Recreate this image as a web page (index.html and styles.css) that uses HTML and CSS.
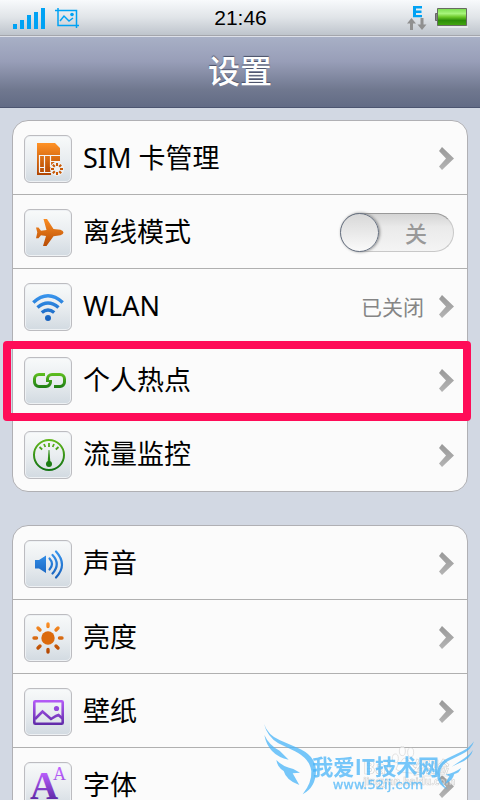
FILE: index.html
```html
<!DOCTYPE html>
<html lang="zh-CN">
<head>
  <meta charset="UTF-8">
  <meta name="viewport" content="width=device-width, initial-scale=1.0">
  <title>设置</title>
  <link rel="stylesheet" href="styles.css">
</head>
<body>
<svg class="defs" width="0" height="0" aria-hidden="true">
  <defs>
    <linearGradient id="orange" gradientUnits="userSpaceOnUse" x1="0" y1="8" x2="0" y2="40"><stop offset="0" stop-color="#ff9226"/><stop offset="1" stop-color="#b04400"/></linearGradient>
    <linearGradient id="blue" gradientUnits="userSpaceOnUse" x1="0" y1="8" x2="0" y2="40"><stop offset="0" stop-color="#3c9cf4"/><stop offset="1" stop-color="#145cb8"/></linearGradient>
    <linearGradient id="green" gradientUnits="userSpaceOnUse" x1="0" y1="9" x2="0" y2="38"><stop offset="0" stop-color="#62b81c"/><stop offset="1" stop-color="#147414"/></linearGradient>
    <linearGradient id="link-green" gradientUnits="userSpaceOnUse" x1="0" y1="16" x2="0" y2="31"><stop offset="0" stop-color="#60c020"/><stop offset="1" stop-color="#1c7c14"/></linearGradient>
    <linearGradient id="purple" gradientUnits="userSpaceOnUse" x1="0" y1="10" x2="0" y2="38"><stop offset="0" stop-color="#bc60ff"/><stop offset="1" stop-color="#5c28a4"/></linearGradient>
    <linearGradient id="battery" x1="0" y1="0" x2="0" y2="1"><stop offset="0" stop-color="#78dc4c"/><stop offset=".3" stop-color="#a8f47c"/><stop offset=".5" stop-color="#6cc828"/><stop offset=".7" stop-color="#2c8c08"/><stop offset="1" stop-color="#44a810"/></linearGradient>
    <linearGradient id="arrow" x1="0" y1="0" x2="0" y2="1"><stop offset="0" stop-color="#999"/><stop offset="1" stop-color="#b4b4b4"/></linearGradient>
    <symbol id="chevron" viewBox="0 0 15 23"><path fill="url(#arrow)" d="M3 0 15 11.5 3 23 0 19.5 7 11.5 0 4z"/></symbol>
  </defs>
</svg>

<div class="status-bar">
  <div class="status-left">
    <svg width="33" height="22" viewBox="0 0 33 22" fill="#00a2f4"><path d="M0 17h4v5H0zM7 13h4v9H7zM14 8h4v14h-4zM21 5h4v17h-4zM28 1h4v21h-4z"/></svg>
    <svg width="24" height="20" viewBox="0 0 24 20" fill="none" stroke="#00a2f4" stroke-width="1.5"><path d="M0 2.500h21.500V20M3 0v17.500h21M5 13l4-5 5 5 4-3"/><circle cx="17" cy="6.500" r="1.800" fill="#00a2f4" stroke="none"/></svg>
  </div>
  <time>21:46</time>
  <div class="status-right">
    <svg width="22" height="26" viewBox="0 0 22 26"><path fill="#00a2f4" d="M7 1h9v2.500h-6v2h5.500v2.400H10v2h6V12.300H7z"/><path fill="#909090" d="M5.500 13 10 18.500H7V25H4v-6.500H1zM16 25l-4.500-5.500h3V13h3v6.500h3z"/></svg>
    <svg width="33" height="20" viewBox="0 0 33 20"><path fill="#fff" d="M3 18.500h30v1H3z"/><path fill="#858585" stroke="#666" d="M.5 5.500h3v7h-3z"/><path fill="url(#battery)" stroke="#666b60" d="M2.500.5h29v17h-29z"/></svg>
  </div>
</div>

<header class="title-bar"><h1>设置</h1></header>

<main>
  <ul class="group">
    <li>
      <a class="row" href="#sim">
        <svg class="icon" viewBox="1 1 46 46"><path fill="url(#orange)" d="M13 8h18l5 5v14h-5l-4 4v9H13z"/><path stroke="#f4f6f8" stroke-width="1.200" fill="none" d="M15.500 37.500v-17H36M15.500 32.500h5M20.500 20.500v17M15.500 37.500H27M26.500 20.500V32M26.500 26.500H36"/><circle cx="33" cy="34" r="7" fill="#eef1f4"/><path stroke="#c85a08" stroke-width="2" d="M33 28v3M33 37v3M27 34h3M36 34h3M28.800 29.800l2 2M35.200 36.200l2 2M28.800 38.200l2-2M35.200 31.800l2-2"/></svg>
        <span class="name">SIM 卡管理</span>
        <svg class="chevron"><use href="#chevron"/></svg>
      </a>
    </li>
    <li class="row">
      <svg class="icon" viewBox="1 1 46 46"><path fill="url(#orange)" d="M19.500 10h3.500l6.500 10 7 .7q3 1.200 3 2.800t-3 2.800l-7 .9L22.500 37H19l3-10-5-.8-2.500 3H12l1.300-5.700L12 18.500h2.500l2.500 3.300 5.500-.9z"/></svg>
      <label class="name" for="offline">离线模式</label>
      <span class="switch"><input type="checkbox" id="offline"><span class="switch-text">关</span></span>
    </li>
    <li>
      <a class="row" href="#wlan">
        <svg class="icon" viewBox="1 1 46 46"><g fill="none" stroke="url(#blue)" stroke-width="3.500"><path d="M9.300 19.500Q24 6 38.700 19.500"/><path d="M13.500 24.500q10.500-9 21 0"/><path d="M17.800 29.500q6.200-5 12.400 0"/></g><circle cx="24" cy="35" r="3" fill="url(#blue)"/></svg>
        <span class="name">WLAN</span>
        <span class="value">已关闭</span>
        <svg class="chevron"><use href="#chevron"/></svg>
      </a>
    </li>
    <li class="marked">
      <a class="row" href="#hotspot">
        <svg class="icon" viewBox="1 1 46 46"><g fill="none" stroke="url(#link-green)" stroke-width="3"><path d="M21 17.500h-6a4.500 4.500 0 0 0-4.500 4.500v3a4.500 4.500 0 0 0 4.500 4.500h7a4.500 4.500 0 0 0 4.500-4.500v-2"/><path d="M30 29.500h6a4.500 4.500 0 0 0 4.500-4.500v-3a4.500 4.500 0 0 0-4.500-4.500h-8a4.500 4.500 0 0 0-4.500 4.500v3"/></g></svg>
        <span class="name">个人热点</span>
        <svg class="chevron"><use href="#chevron"/></svg>
      </a>
    </li>
    <li>
      <a class="row" href="#traffic">
        <svg class="icon" viewBox="1 1 46 46"><g fill="none" stroke="url(#green)"><circle cx="25" cy="24" r="15" stroke-width="2"/><path stroke-width="1.800" d="M25.001 12 25 16M20 13l1.300 3M30 13l-1.300 3M15.500 16l2.700 2.500M34.500 16l-2.700 2.500"/></g><path fill="#2c8c14" d="M24.600 19h.8L26.500 33h-3z"/><circle cx="25" cy="33" r="3" fill="#1c7c14"/></svg>
        <span class="name">流量监控</span>
        <svg class="chevron"><use href="#chevron"/></svg>
      </a>
    </li>
  </ul>

  <ul class="group">
    <li>
      <a class="row" href="#sound">
        <svg class="icon" viewBox="1 1 46 46"><path fill="url(#blue)" d="M11 20h4l7-4.500v17.500l-7-4.500h-4z"/><g fill="none" stroke="url(#blue)" stroke-width="2.200" stroke-linecap="round"><path d="M25.500 18.500q5 5.500 0 11M28.500 15q8.500 9 0 18.500M32 11.500q12 13 0 26"/></g></svg>
        <span class="name">声音</span>
        <svg class="chevron"><use href="#chevron"/></svg>
      </a>
    </li>
    <li>
      <a class="row" href="#brightness">
        <svg class="icon" viewBox="1 1 46 46"><circle cx="24" cy="24" r="6.700" fill="#dc6a0c"/><path stroke="url(#orange)" stroke-width="3.400" stroke-linecap="round" d="M24 10v2.500M24 35.500V38M10 24h2.500M35.500 24H38M14 14l2 2M32 32l2 2M14 34l2-2M32 16l2-2"/></svg>
        <span class="name">亮度</span>
        <svg class="chevron"><use href="#chevron"/></svg>
      </a>
    </li>
    <li>
      <a class="row" href="#wallpaper">
        <svg class="icon" viewBox="1 1 46 46"><g fill="none" stroke="url(#purple)" stroke-width="2.600"><rect x="10.300" y="13.300" width="28.400" height="22.400" rx="1"/><path d="m11 31 7.500-7.500L27 31l5-3 2.500-1 4 3.500"/></g><circle cx="32.500" cy="20.500" r="2.600" fill="#9448dc"/></svg>
        <span class="name">壁纸</span>
        <svg class="chevron"><use href="#chevron"/></svg>
      </a>
    </li>
    <li>
      <a class="row" href="#font">
        <svg class="icon letters" viewBox="1 1 46 46"><text class="letter-big" x="6" y="37">A</text><text class="letter-small" x="29" y="18">A</text></svg>
        <span class="name">字体</span>
        <svg class="chevron"><use href="#chevron"/></svg>
      </a>
    </li>
  </ul>
</main>

<svg class="watermark" viewBox="0 0 690 270" aria-hidden="true">
  <g class="ghost">
    <ellipse cx="436" cy="145" rx="9" ry="13"/><ellipse cx="457" cy="123" rx="9" ry="14"/><ellipse cx="482" cy="127" rx="9" ry="14"/><path d="M438 178q4-16 16-24 8-18 22-2 8 14 22 22-2 20-24 14-20 2-36-10z"/>
    <text x="340" y="192" font-size="54">Bai</text><text x="490" y="194" font-size="54">经验</text>
    <text x="340" y="224" font-size="30">jingyan.baidu.com</text>
  </g>
  <g class="wings">
    <path d="M42 42Q54 76 90 91L142 113Q196 135 198 181 198 232 158 253 186 218 184 184 180 147 135 124L85 100Q52 80 42 42z"/>
    <path d="M43 75Q58 107 89 122L116 149Q55 137 43 75z"/>
    <path d="M79 150Q98 170 130 177L150 188 128 190 148 225Q109 212 101 183 82 172 79 150z"/>
    <path d="M672 94Q665 119 635 133L593 154Q565 172 571 205 580 229 594 239 560 226 561 190 562 156 602 140L638 123Q659 113 672 94z"/>
    <path d="M669 120Q662 149 622 162L605 170Q632 152 645 143 661 133 669 120z"/>
    <path d="M633 174Q628 190 613 192 608 212 585 222L598 198 586 194Q612 190 633 174z"/>
  </g>
  <text class="site" x="186" y="195">我爱IT技术网</text>
  <text class="site-url" x="248" y="237">www.52ij.com</text>
</svg>
</body>
</html>
```

FILE: styles.css
```css
* { box-sizing: border-box; }

body {
    display: flex;
    flex-direction: column;
    height: 100vh;
    margin: 0;
    overflow: hidden;
    background: #d2d8e3;
    color: #000;
    font-family: "Noto Sans", "Noto Sans CJK SC", sans-serif;
}

svg { display: block; flex: none; }
.defs { position: absolute; }

/* Status bar */
.status-bar {
    display: grid;
    grid-template-columns: 1fr auto 1fr;
    align-items: center;
    flex: none;
    height: 36px;
    padding: 0 12px 0 13px;
    background: linear-gradient(#f8fafc, #e0e4e8 50%, #bec4cc);
    border-bottom: 1px solid #a4a6ac;
}
.status-left { display: flex; align-items: center; gap: 9px; }
.status-right { display: flex; align-items: center; justify-content: flex-end; gap: 7px; }
time { font-family: "Liberation Sans", sans-serif; font-size: 21px; line-height: 22px; }

/* Title bar */
.title-bar {
    display: flex;
    align-items: center;
    justify-content: center;
    flex: none;
    height: 72px;
    padding-bottom: 3px;
    background: linear-gradient(#a8b0c6, #989eb8 35%, #70788f 75%, #626b85);
    border-top: 1px solid #dde0e8;
    border-bottom: 1px solid #4c5570;
}
h1 {
    margin: 0;
    color: #fff;
    font-size: 32px;
    font-weight: 500;
    line-height: 40px;
    text-shadow: 0 -1px 1px #4a5068;
}

main {
    flex: 1;
    min-height: 0;
    padding: 12px;
    overflow: hidden;
}

/* Setting groups */
.group {
    margin: 0 0 33px;
    padding: 0;
    list-style: none;
    background: #fbfbfb;
    border: 1px solid #b0b0b4;
    border-radius: 16px;
}
.group li + li { border-top: 1px solid #b0b0b0; }
.row {
    display: flex;
    align-items: center;
    height: 73px;
    padding: 2px 13px 0 11px;
    color: inherit;
    text-decoration: none;
}
li.row { height: 74px; }
.group li:last-child .row { height: 74px; }
.icon {
    width: 48px;
    height: 48px;
    border: 1px solid #bcbcc0;
    border-radius: 6px;
    background: linear-gradient(#f8fafa, #e9edf0 50%, #d2dae1);
    box-shadow: inset 0 0 0 1px #eef1f4;
}
.name {
    flex: 1;
    margin-left: 11px;
    padding-bottom: 2px;
    font-size: 27px;
    line-height: 36px;
}
.value { margin-right: 15px; color: #858585; font-size: 21px; line-height: 28px; }
.chevron { width: 15px; height: 23px; }

/* Hotspot row outline */
.marked { position: relative; }
.marked::after {
    content: "";
    position: absolute;
    inset: -2px -4px -5px -10px;
    border: 8px solid #ff0c58;
    border-radius: 4px;
    pointer-events: none;
}

/* Switch */
.switch {
    display: flex;
    align-items: center;
    width: 114px;
    height: 39px;
    border: 1px solid #c8c8c8;
    border-top-color: #999;
    border-radius: 20px;
    background: linear-gradient(#d4d4d4, #eaeaea 35%, #f4f4f4);
}
.switch input {
    appearance: none;
    width: 39px;
    height: 39px;
    margin: 0 0 0 -1px;
    border: 1px solid #667080;
    border-radius: 50%;
    background: linear-gradient(#d8d8d8, #fafafa);
    box-shadow: 1px 0 3px #888;
}
.switch-text {
    margin-left: 26px;
    color: #999;
    font-size: 22px;
    font-weight: 500;
    line-height: 28px;
}

.letters text { fill: url(#purple); font-family: "Liberation Serif", serif; }
.letter-big { font-size: 39px; font-weight: bold; }
.letter-small { font-size: 18px; }

/* Site watermark */
.watermark {
    position: fixed;
    right: 0;
    bottom: 0;
    width: 230px;
    height: 90px;
    pointer-events: none;
}
.wings, .site, .site-url { fill: #48b4f8; opacity: 0.75; }
.site { font-family: "Noto Sans CJK SC", sans-serif; font-size: 64px; font-weight: bold; }
.site-url { font-family: "DejaVu Sans", sans-serif; font-size: 39px; stroke: #48b4f8; stroke-width: 1px; }
.ghost { fill: #fff; stroke: #bbb; stroke-width: 2px; opacity: 0.6; font-weight: bold; }
```
